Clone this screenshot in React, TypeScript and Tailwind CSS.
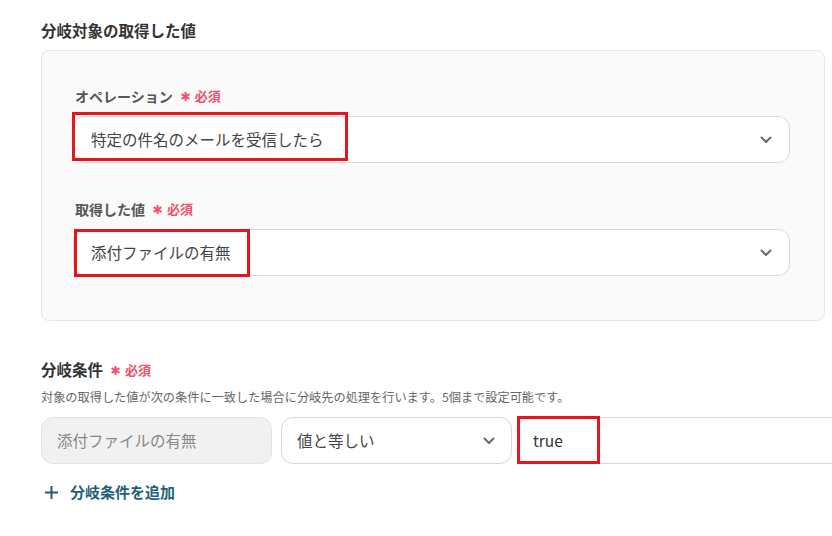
import React from "react";

const font = { fontFamily: '"Noto Sans CJK JP", "Noto Sans", sans-serif' };

function Chevron() {
  return (
    <svg width="12" height="8" viewBox="0 0 12 8" fill="none" className="text-[#6b6b6b]">
      <path d="M1.5 1.5 6 6l4.5-4.5" stroke="currentColor" strokeWidth="2" strokeLinecap="round" strokeLinejoin="round" />
    </svg>
  );
}

function Required() {
  return (
    <span className="ml-[7px] inline-flex items-center gap-[4px] text-[#f0506a]">
      <svg width="11" height="11" viewBox="0 0 12 12" fill="none">
        <path d="M6 1v10M1.7 3.5l8.6 5M1.7 8.5l8.6-5" stroke="currentColor" strokeWidth="2.2" />
      </svg>
      <span className="text-[13px] font-bold">必須</span>
    </span>
  );
}

function Mark({ className }: { className: string }) {
  return <div className={`pointer-events-none absolute border-[3px] border-[#e3161d] ${className}`} />;
}

function Select({ value, mark }: { value: string; mark: string }) {
  return (
    <div className="relative">
      <div className="flex h-[47px] items-center justify-between rounded-xl border border-[#d5d9de] bg-white pl-[17px] pr-[17px]">
        <span className="text-[15.5px] text-[#444]">{value}</span>
        <Chevron />
      </div>
      <Mark className={mark} />
    </div>
  );
}

export default function App() {
  return (
    <div className="h-[536px] w-[832px] overflow-hidden bg-white pl-[41px] pt-[18px]" style={font}>
      <h2 className="text-[15.5px] font-bold leading-6 text-[#333]">分岐対象の取得した値</h2>

      <div className="mt-2 w-[784px] rounded-lg border border-[#e6e6e6] bg-[#fafafa] pb-[44px] pl-[31px] pr-[34px] pt-[35px]">
        <label className="flex h-5 items-center pl-[2px] text-[14px] font-bold text-[#555]">
          オペレーション
          <Required />
        </label>
        <div className="mt-2.5">
          <Select value="特定の件名のメールを受信したら" mark="-left-[1px] -top-[4px] h-[49px] w-[276px]" />
        </div>

        <label className="mt-[36px] flex h-5 items-center pl-[2px] text-[14px] font-bold text-[#555]">
          取得した値
          <Required />
        </label>
        <div className="mt-2.5">
          <Select value="添付ファイルの有無" mark="left-[1px] top-0 h-[48px] w-[176px]" />
        </div>
      </div>

      <h2 className="mt-[37px] flex h-6 items-center text-[15.5px] font-bold text-[#333]">
        分岐条件
        <Required />
      </h2>
      <p className="mt-1.5 whitespace-nowrap text-[12.2px] leading-[18px] text-[#666]">
        対象の取得した値が次の条件に一致した場合に分岐先の処理を行います。5個まで設定可能です。
      </p>

      <div className="mt-[11px] flex">
        <div className="flex h-[47px] w-[231px] shrink-0 items-center rounded-xl border border-[#e3e3e3] bg-[#f1f1f1] pl-[15px] text-[15.5px] text-[#888]">
          添付ファイルの有無
        </div>
        <div className="ml-[9px] flex h-[47px] w-[231px] shrink-0 items-center justify-between rounded-xl border border-[#d5d9de] bg-white pl-[15px] pr-[16px] text-[15.5px] text-[#444]">
          値と等しい
          <Chevron />
        </div>
        <div className="relative ml-[6px] shrink-0">
          <div className="flex h-[47px] w-[340px] items-center rounded-xl border border-[#d5d9de] bg-white pl-[14px] text-[15.5px] text-[#333]">
            true
          </div>
          <Mark className="-left-[1px] -top-[1px] h-[48px] w-[83px]" />
        </div>
      </div>

      <button className="mt-[18px] flex h-5 items-center gap-[11px] pl-[3px] text-[15px] font-bold text-[#1f5f78]">
        <svg width="15" height="15" viewBox="0 0 15 15" fill="none">
          <path d="M7.5 1v13M1 7.5h13" stroke="currentColor" strokeWidth="2" />
        </svg>
        分岐条件を追加
      </button>
    </div>
  );
}
